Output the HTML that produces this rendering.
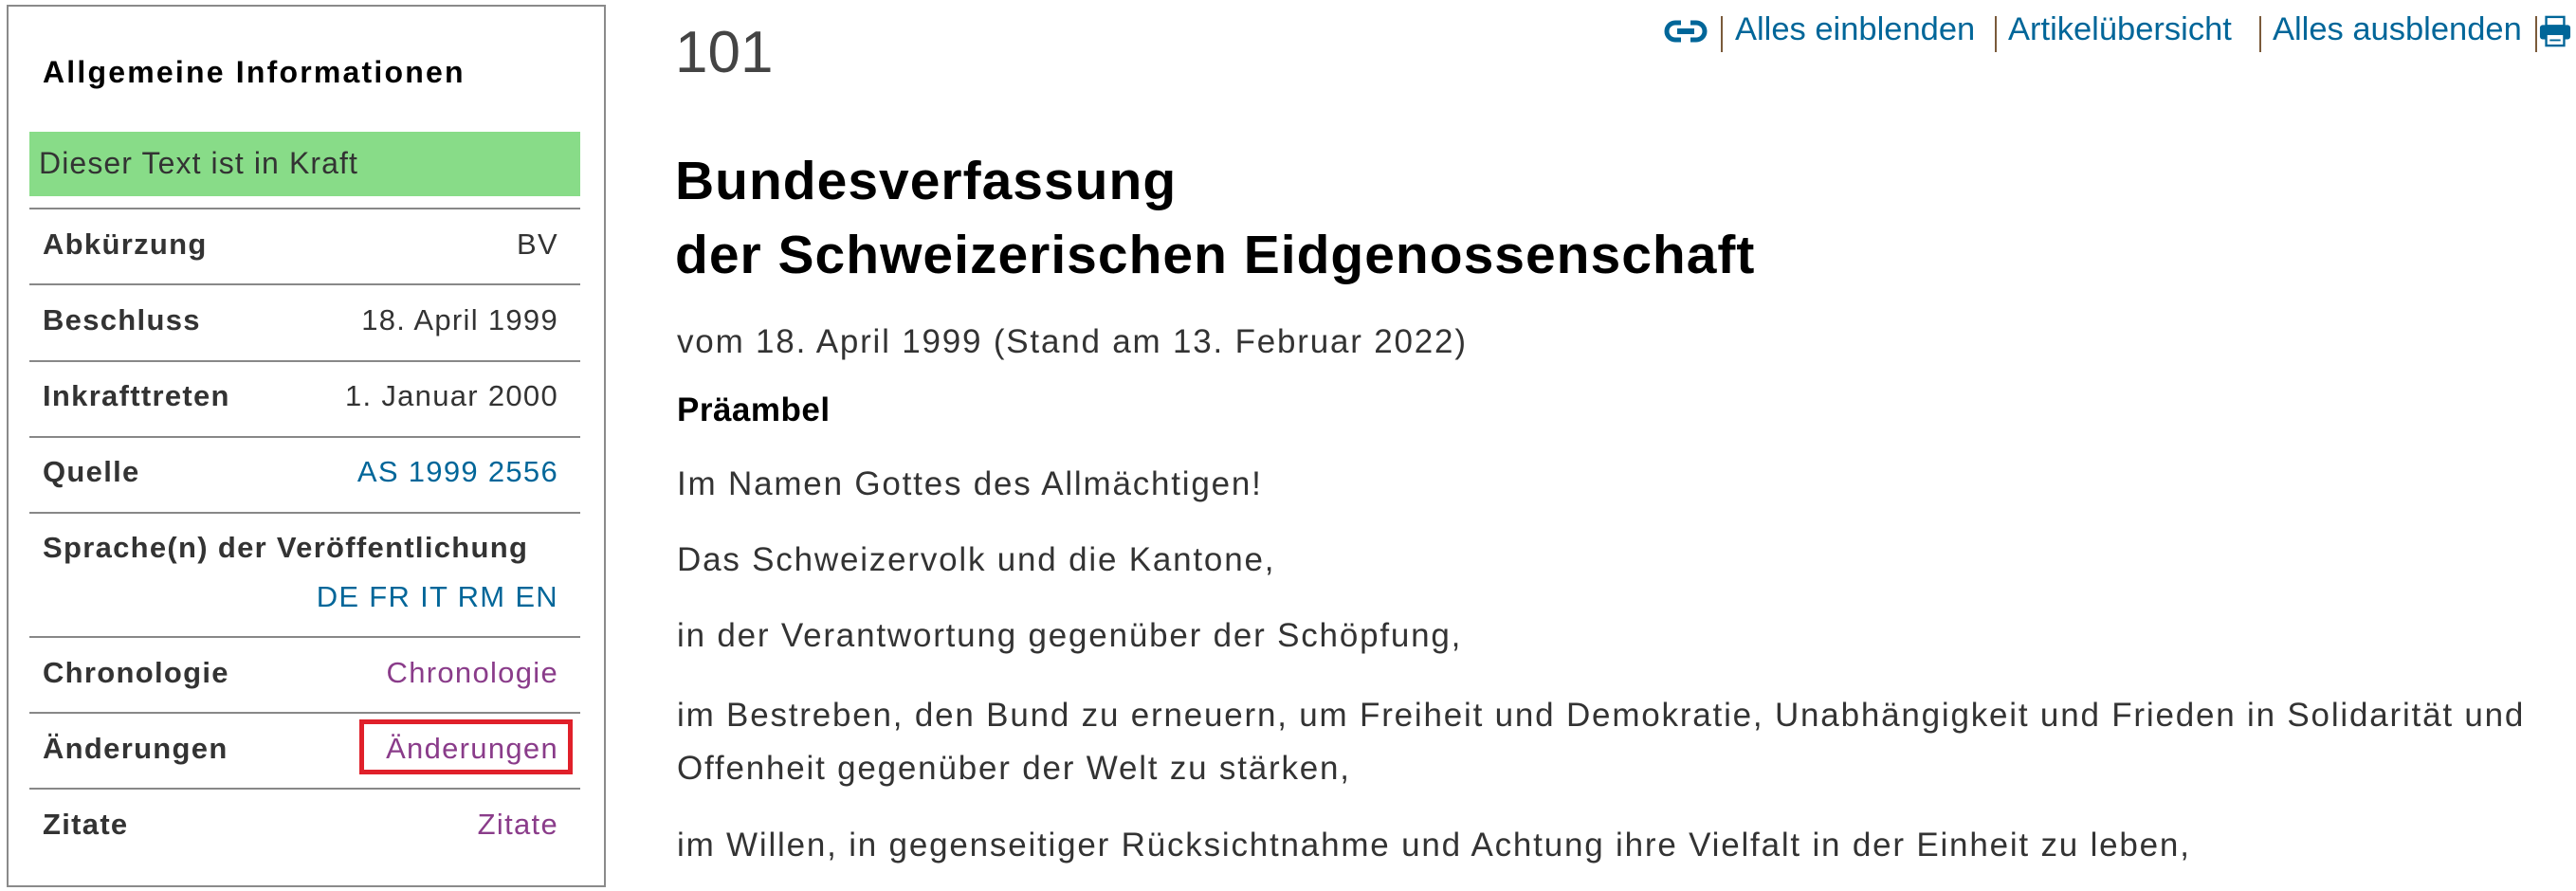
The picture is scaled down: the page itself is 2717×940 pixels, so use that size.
<!DOCTYPE html>
<html><head><meta charset="utf-8"><style>
*{margin:0;padding:0;box-sizing:border-box}
body{width:2717px;height:940px;background:#fff;position:relative;overflow:hidden;font-family:"Liberation Sans",sans-serif;color:#333}
.box{position:absolute;left:7px;top:5px;width:632px;height:931px;border:2px solid #8a8a8a}
.t{position:absolute;white-space:nowrap}
.hd{left:45px;top:58px;font-size:32px;font-weight:bold;color:#000;letter-spacing:2.2px}
.green{position:absolute;left:31px;top:139px;width:581px;height:68px;background:#88dc88}
.green span{position:absolute;left:10px;top:15px;font-size:32px;color:#333;letter-spacing:1.1px}
.ln{position:absolute;left:31px;width:581px;height:2px;background:#888}
.lab{left:45px;font-size:31px;font-weight:bold;color:#333;letter-spacing:1.3px}
.val{right:2128px;font-size:31px;color:#333;letter-spacing:1.3px}
.blue{color:#006699}
.pur{color:#8a3c8a}
.m{left:714px;font-size:35px;color:#333;letter-spacing:1.8px}
.tb{top:12px;font-size:34.5px;color:#006699}
.sep{position:absolute;top:17px;width:2px;height:38px;background:#7a5a3a}
</style></head><body>
<div class="box"></div>
<div class="t hd">Allgemeine Informationen</div>
<div class="green"><span>Dieser Text ist in Kraft</span></div>
<div class="ln" style="top:219px"></div>
<div class="ln" style="top:299px"></div>
<div class="ln" style="top:380px"></div>
<div class="ln" style="top:460px"></div>
<div class="ln" style="top:540px"></div>
<div class="ln" style="top:671px"></div>
<div class="ln" style="top:751px"></div>
<div class="ln" style="top:831px"></div>
<div class="t lab" style="top:240px">Abkürzung</div><div class="t val" style="top:240px">BV</div>
<div class="t lab" style="top:320px">Beschluss</div><div class="t val" style="top:320px">18. April 1999</div>
<div class="t lab" style="top:400px">Inkrafttreten</div><div class="t val" style="top:400px">1. Januar 2000</div>
<div class="t lab" style="top:480px">Quelle</div><div class="t val blue" style="top:480px">AS 1999 2556</div>
<div class="t lab" style="top:560px">Sprache(n) der Veröffentlichung</div><div class="t val blue" style="top:612px">DE FR IT RM EN</div>
<div class="t lab" style="top:692px">Chronologie</div><div class="t val pur" style="top:692px">Chronologie</div>
<div class="t lab" style="top:772px">Änderungen</div><div class="t val pur" style="top:772px">Änderungen</div>
<div style="position:absolute;left:379px;top:759px;width:225px;height:58px;border:5px solid #e0202a"></div>
<div class="t lab" style="top:852px">Zitate</div><div class="t val pur" style="top:852px">Zitate</div>

<div class="t" style="left:712px;top:20px;font-size:62px;color:#444">101</div>
<div class="t" style="left:712px;top:152px;font-size:57px;font-weight:bold;color:#000;line-height:78px;letter-spacing:1px">Bundesverfassung<br>der Schweizerischen Eidgenossenschaft</div>
<div class="t m" style="top:341px">vom 18. April 1999 (Stand am 13. Februar 2022)</div>
<div class="t m" style="top:413px;font-weight:bold;color:#000;letter-spacing:0.5px">Präambel</div>
<div class="t m" style="top:491px">Im Namen Gottes des Allmächtigen!</div>
<div class="t m" style="top:571px">Das Schweizervolk und die Kantone,</div>
<div class="t m" style="top:651px">in der Verantwortung gegenüber der Schöpfung,</div>
<div class="t m" style="top:727px;line-height:56px">im Bestreben, den Bund zu erneuern, um Freiheit und Demokratie, Unabhängigkeit und Frieden in Solidarität und<br>Offenheit gegenüber der Welt zu stärken,</div>
<div class="t m" style="top:872px">im Willen, in gegenseitiger Rücksichtnahme und Achtung ihre Vielfalt in der Einheit zu leben,</div>

<svg style="position:absolute;left:1755px;top:21px" width="46" height="24" viewBox="0 0 46 24"><rect x="3" y="3" width="40" height="18" rx="9" fill="none" stroke="#006699" stroke-width="5"/><rect x="14" y="9" width="18" height="6" fill="#006699"/><rect x="18" y="0" width="10" height="6" fill="#fff"/><rect x="18" y="18" width="10" height="6" fill="#fff"/></svg>
<div class="sep" style="left:1815px"></div>
<div class="t tb" style="left:1830px">Alles einblenden</div>
<div class="sep" style="left:2104px"></div>
<div class="t tb" style="left:2118px">Artikelübersicht</div>
<div class="sep" style="left:2383px"></div>
<div class="t tb" style="left:2397px">Alles ausblenden</div>
<div class="sep" style="left:2674px"></div>
<svg style="position:absolute;left:2678px;top:15px" width="34" height="36" viewBox="0 0 36 36"><rect x="8" y="2" width="20" height="10" fill="#fff" stroke="#006699" stroke-width="2.5"/><rect x="1" y="11" width="34" height="16" rx="3" fill="#006699"/><rect x="8" y="21" width="20" height="13" fill="#fff" stroke="#006699" stroke-width="2.5"/><rect x="12" y="27" width="12" height="2" fill="#006699"/></svg>
</body></html>
